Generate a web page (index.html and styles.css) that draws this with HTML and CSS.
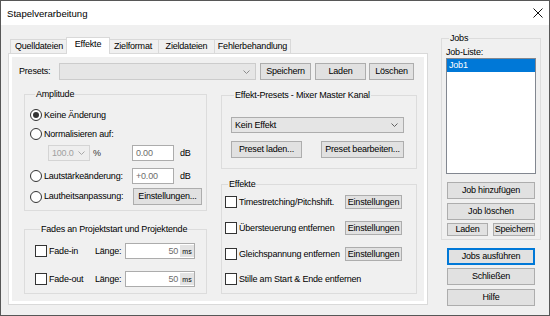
FILE: index.html
```html
<!DOCTYPE html>
<html lang="de">
<head>
<meta charset="utf-8">
<title>Stapelverarbeitung</title>
<link rel="stylesheet" href="styles.css">
</head>
<body>
<div class="window">
  <div class="titlebar">
    <span class="title">Stapelverarbeitung</span>
    <svg class="close" width="10" height="10" viewBox="0 0 10 10"><path d="M0.5 0.5L9.5 9.5M9.5 0.5L0.5 9.5" stroke="#111" stroke-width="1" fill="none"/></svg>
  </div>
  <div class="client">
    <div class="tabcontrol">
      <div class="tabs">
        <div class="tab tab-src">Quelldateien</div>
        <div class="tab tab-fx active">Effekte</div>
        <div class="tab tab-fmt">Zielformat</div>
        <div class="tab tab-dst">Zieldateien</div>
        <div class="tab tab-err">Fehlerbehandlung</div>
      </div>
      <div class="tabpanel">
        <div class="page">
          <div class="presets-row">
            <span class="presets-label">Presets:</span>
            <div class="combo combo-disabled presets-combo"><span></span><svg class="chev" width="7" height="4" viewBox="0 0 7 4"><path d="M0.5 0.5L3.5 3.5L6.5 0.5" stroke="#8c8c8c" fill="none"/></svg></div>
            <button class="btn btn-save">Speichern</button>
            <button class="btn btn-load">Laden</button>
            <button class="btn btn-delete">Löschen</button>
          </div>
          <div class="columns">
            <div class="col-left">
              <div class="group group-left amplitude">
                <div class="group-title">Amplitude</div>
                <div class="row amp-r1"><span class="amp-label"><span class="radio checked"></span>Keine Änderung</span></div>
                <div class="row amp-r2"><span class="amp-label"><span class="radio"></span>Normalisieren auf:</span></div>
                <div class="row amp-r3">
                  <div class="combo combo-small"><span>100.0</span><svg class="chev" width="7" height="4" viewBox="0 0 7 4"><path d="M0.5 0.5L3.5 3.5L6.5 0.5" stroke="#a8a8a8" fill="none"/></svg></div>
                  <span class="percent">%</span>
                  <div class="textbox">0.00</div>
                  <span class="unit">dB</span>
                </div>
                <div class="row amp-r4"><span class="amp-label"><span class="radio"></span>Lautstärkeänderung:</span><div class="textbox">+0.00</div><span class="unit">dB</span></div>
                <div class="row amp-r5"><span class="amp-label wide"><span class="radio"></span>Lautheitsanpassung:</span><button class="btn btn-settings">Einstellungen...</button></div>
              </div>
              <div class="group group-left fades">
                <div class="group-title">Fades an Projektstart und Projektende</div>
                <div class="row fade-row fade-r1">
                  <span class="fade-check"><span class="checkbox"></span>Fade-in</span>
                  <span class="fade-len">Länge:</span>
                  <div class="textbox ms-box"><span class="ms-value">50</span><span class="ms">ms</span></div>
                </div>
                <div class="row fade-row fade-r2">
                  <span class="fade-check"><span class="checkbox"></span>Fade-out</span>
                  <span class="fade-len">Länge:</span>
                  <div class="textbox ms-box"><span class="ms-value">50</span><span class="ms">ms</span></div>
                </div>
              </div>
            </div>
            <div class="col-right">
              <div class="group fx-presets">
                <div class="group-title">Effekt-Presets - Mixer Master Kanal</div>
                <div class="combo fx-combo"><span>Kein Effekt</span><svg class="chev" width="7" height="4" viewBox="0 0 7 4"><path d="M0.5 0.5L3.5 3.5L6.5 0.5" stroke="#606060" fill="none"/></svg></div>
                <div class="fx-buttons">
                  <button class="btn btn-preset-load">Preset laden...</button>
                  <button class="btn btn-preset-edit">Preset bearbeiten...</button>
                </div>
              </div>
              <div class="group effects">
                <div class="group-title">Effekte</div>
                <div class="fx-row fx-r1"><span class="fx-label"><span class="checkbox"></span>Timestretching/Pitchshift.</span><button class="btn btn-small">Einstellungen</button></div>
                <div class="fx-row fx-r2"><span class="fx-label"><span class="checkbox"></span>Übersteuerung entfernen</span><button class="btn btn-small">Einstellungen</button></div>
                <div class="fx-row fx-r3"><span class="fx-label"><span class="checkbox"></span>Gleichspannung entfernen</span><button class="btn btn-small">Einstellungen</button></div>
                <div class="fx-row fx-r4"><span class="fx-label"><span class="checkbox"></span>Stille am Start &amp; Ende entfernen</span></div>
              </div>
            </div>
          </div>
        </div>
      </div>
    </div>
    <div class="jobs-col">
      <div class="group jobs">
        <div class="group-title">Jobs</div>
        <div class="list-label">Job-Liste:</div>
        <div class="listbox"><div class="list-item selected">Job1</div></div>
        <div class="job-buttons">
          <button class="btn btn-job">Job hinzufügen</button>
          <button class="btn btn-job btn-job-del">Job löschen</button>
          <div class="job-io">
            <button class="btn btn-io btn-io-load">Laden</button>
            <button class="btn btn-io btn-io-save">Speichern</button>
          </div>
        </div>
      </div>
      <button class="btn btn-main btn-default">Jobs ausführen</button>
      <button class="btn btn-main btn-close">Schließen</button>
      <button class="btn btn-main btn-help">Hilfe</button>
    </div>
  </div>
</div>
</body>
</html>
```

FILE: styles.css
```css
* { box-sizing: border-box; }
html, body { margin: 0; padding: 0; }
body {
  width: 550px;
  height: 316px;
  overflow: hidden;
  font-family: "Liberation Sans", Arial, sans-serif;
  font-size: 9px;
  letter-spacing: -0.2px;
  line-height: 11px;
  color: #000;
  background: #f0f0f0;
}
.window {
  width: 550px;
  height: 316px;
  border: 1px solid #575757;
  background: #f0f0f0;
  display: flex;
  flex-direction: column;
}
.titlebar {
  height: 24px;
  flex: none;
  background: #fff;
  display: flex;
  align-items: center;
  justify-content: space-between;
  padding: 0 6px 0 6px;
}
.title { font-size: 9.6px; letter-spacing: 0; }
.close { display: block; }

.client { display: flex; align-items: flex-start; flex: 1; }

/* tab control */
.tabcontrol { margin: 12px 0 0 7px; width: 420px; flex: none; }
.tabs { display: flex; align-items: flex-end; height: 16px; padding-left: 2px; }
.tab {
  height: 14px;
  padding: 0;
  border: 1px solid #d9d9d9;
  border-bottom: none;
  margin-left: -1px;
  background: #f0f0f0;
  line-height: 13px;
  text-align: center;
  white-space: nowrap;
  flex: none;
}
.tab:first-child { margin-left: 0; }
.tab-src { width: 58px; }
.tab-fmt { width: 52px; }
.tab-dst { width: 57px; }
.tab-err { width: 77px; }
.tab.active {
  width: 44px;
  height: 17px;
  margin: 0 -2px -1px -2px;
  background: #fff;
  position: relative;
  z-index: 1;
  line-height: 12px;
}
.tabpanel {
  border: 1px solid #d9d9d9;
  background: #fff;
  padding: 3px;
  height: 252px;
}
.page { background: #f0f0f0; height: 100%; padding: 6px 0 0 7px; }

/* controls */
.btn {
  font: inherit;
  letter-spacing: inherit;
  line-height: 11px;
  color: #000;
  background: #e1e1e1;
  border: 1px solid #adadad;
  padding: 0;
  margin: 0;
  height: 17px;
  display: flex;
  align-items: center;
  justify-content: center;
  white-space: nowrap;
  flex: none;
}
.combo {
  display: flex;
  align-items: center;
  justify-content: space-between;
  border: 1px solid #adadad;
  background: #e5e5e5;
  padding: 0 5px 0 3px;
  flex: none;
}
.chev { display: block; flex: none; }
.textbox {
  height: 16px;
  width: 42px;
  border: 1px solid #acacac;
  background: #fff;
  color: #6d6d6d;
  padding: 0 3px;
  display: flex;
  align-items: center;
  flex: none;
}
.radio {
  width: 12px;
  height: 12px;
  border: 1px solid #333;
  border-radius: 50%;
  background: #fff;
  margin-right: 2px;
  display: flex;
  align-items: center;
  justify-content: center;
  flex: none;
}
.radio.checked::after {
  content: "";
  width: 6px;
  height: 6px;
  border-radius: 50%;
  background: #333;
}
.checkbox {
  width: 12px;
  height: 12px;
  border: 1px solid #333;
  background: #fff;
  margin-right: 2px;
  flex: none;
}

/* presets row */
.presets-row { display: flex; align-items: center; height: 17px; }
.presets-label { width: 40px; flex: none; }
.presets-combo { width: 197px; height: 17px; background: #e6e6e6; border-color: #cccccc; }
.btn-save { width: 51px; margin-left: 4px; }
.btn-load { width: 51px; margin-left: 4px; }
.btn-delete { width: 45px; margin-left: 3px; }

/* columns */
.columns { display: flex; margin: 14px 0 0 5px; }
.col-left { width: 183px; flex: none; }
.col-right { width: 196px; margin-left: 14px; padding-top: 1px; flex: none; }

.group { border: 1px solid #dcdcdc; }
.group-title {
  margin: -6px 0 0 3px;
  padding: 0 1px;
  height: 11px;
  line-height: 11px;
  width: max-content;
  background: #f0f0f0;
}
.group-left .group-title { margin-left: 5px; }

.row { display: flex; align-items: center; height: 16px; }

/* amplitude */
.amplitude { padding: 0 0 5px 5px; }
.amp-label { width: 102px; display: flex; align-items: center; flex: none; white-space: nowrap; }
.amp-label.wide { width: 103px; }
.amp-r1 { margin-top: 7px; }
.amp-r2 { margin-top: 3px; }
.amp-r3 { margin-top: 3px; }
.amp-r4 { margin-top: 7px; }
.amp-r5 { margin-top: 4px; height: 17px; }
.combo-small {
  width: 42px;
  height: 16px;
  margin-left: 18px;
  background: #eeeeee;
  border-color: #d4d4d4;
  color: #a0a0a0;
  padding: 0 4px 0 3px;
}
.percent { width: 42px; padding-left: 3px; flex: none; color: #333; }
.unit { margin-left: 6px; }
.btn-settings { width: 69px; }

/* fades */
.fades { margin-top: 18px; padding: 0 0 6px 10px; }
.fade-r1 { margin-top: 8px; }
.fade-r2 { margin-top: 12px; }
.fade-check { width: 60px; display: flex; align-items: center; flex: none; }
.fade-len { width: 30px; flex: none; }
.ms-box { width: 70px; padding: 0; justify-content: flex-end; }
.ms-value { margin-right: 2px; }
.ms {
  width: 14px;
  height: 12px;
  background: #e3e3e3;
  color: #000;
  font-size: 7px;
  letter-spacing: 0;
  display: flex;
  align-items: center;
  justify-content: center;
}

/* effect presets */
.fx-presets { padding: 0 9px 10px 9px; }
.fx-combo { width: 173px; height: 16px; margin-top: 16px; background: #e5e5e5; }
.fx-buttons { display: flex; justify-content: space-between; margin-top: 8px; width: 173px; }
.btn-preset-load { width: 71px; }
.btn-preset-edit { width: 83px; }

/* effects */
.effects { margin-top: 15px; padding: 0 0 7px 3px; }
.fx-row { display: flex; align-items: center; height: 14px; }
.fx-r1 { margin-top: 5px; }
.fx-r2 { margin-top: 12px; }
.fx-r3 { margin-top: 12px; }
.fx-r4 { margin-top: 11px; }
.fx-label { width: 120px; display: flex; align-items: center; flex: none; white-space: nowrap; }
.btn-small { width: 57px; height: 14px; }

/* jobs column */
.jobs-col { margin: 13px 0 0 13px; width: 100px; flex: none; }
.jobs { padding: 0 4px 3px 4px; }
.list-label { margin-top: 3px; height: 11px; }
.listbox {
  width: 90px;
  height: 116px;
  border: 1px solid #828790;
  background: #fff;
}
.list-item { height: 13px; line-height: 13px; padding-left: 2px; }
.list-item.selected { background: #0078d7; color: #fff; }
.job-buttons { margin: 8px 0 0 1px; width: 88px; }
.btn-job { width: 88px; }
.btn-job-del { margin-top: 4px; }
.job-io { display: flex; justify-content: space-between; margin-top: 3px; }
.btn-io { height: 13px; }
.btn-io-load { width: 41px; }
.btn-io-save { width: 42px; }
.btn-main { width: 88px; margin-left: 6px; }
.btn-default { margin-top: 8px; border-color: #0078d7; box-shadow: inset 0 0 0 1px #0078d7; }
.btn-close { margin-top: 3px; }
.btn-help { margin-top: 4px; }
```
